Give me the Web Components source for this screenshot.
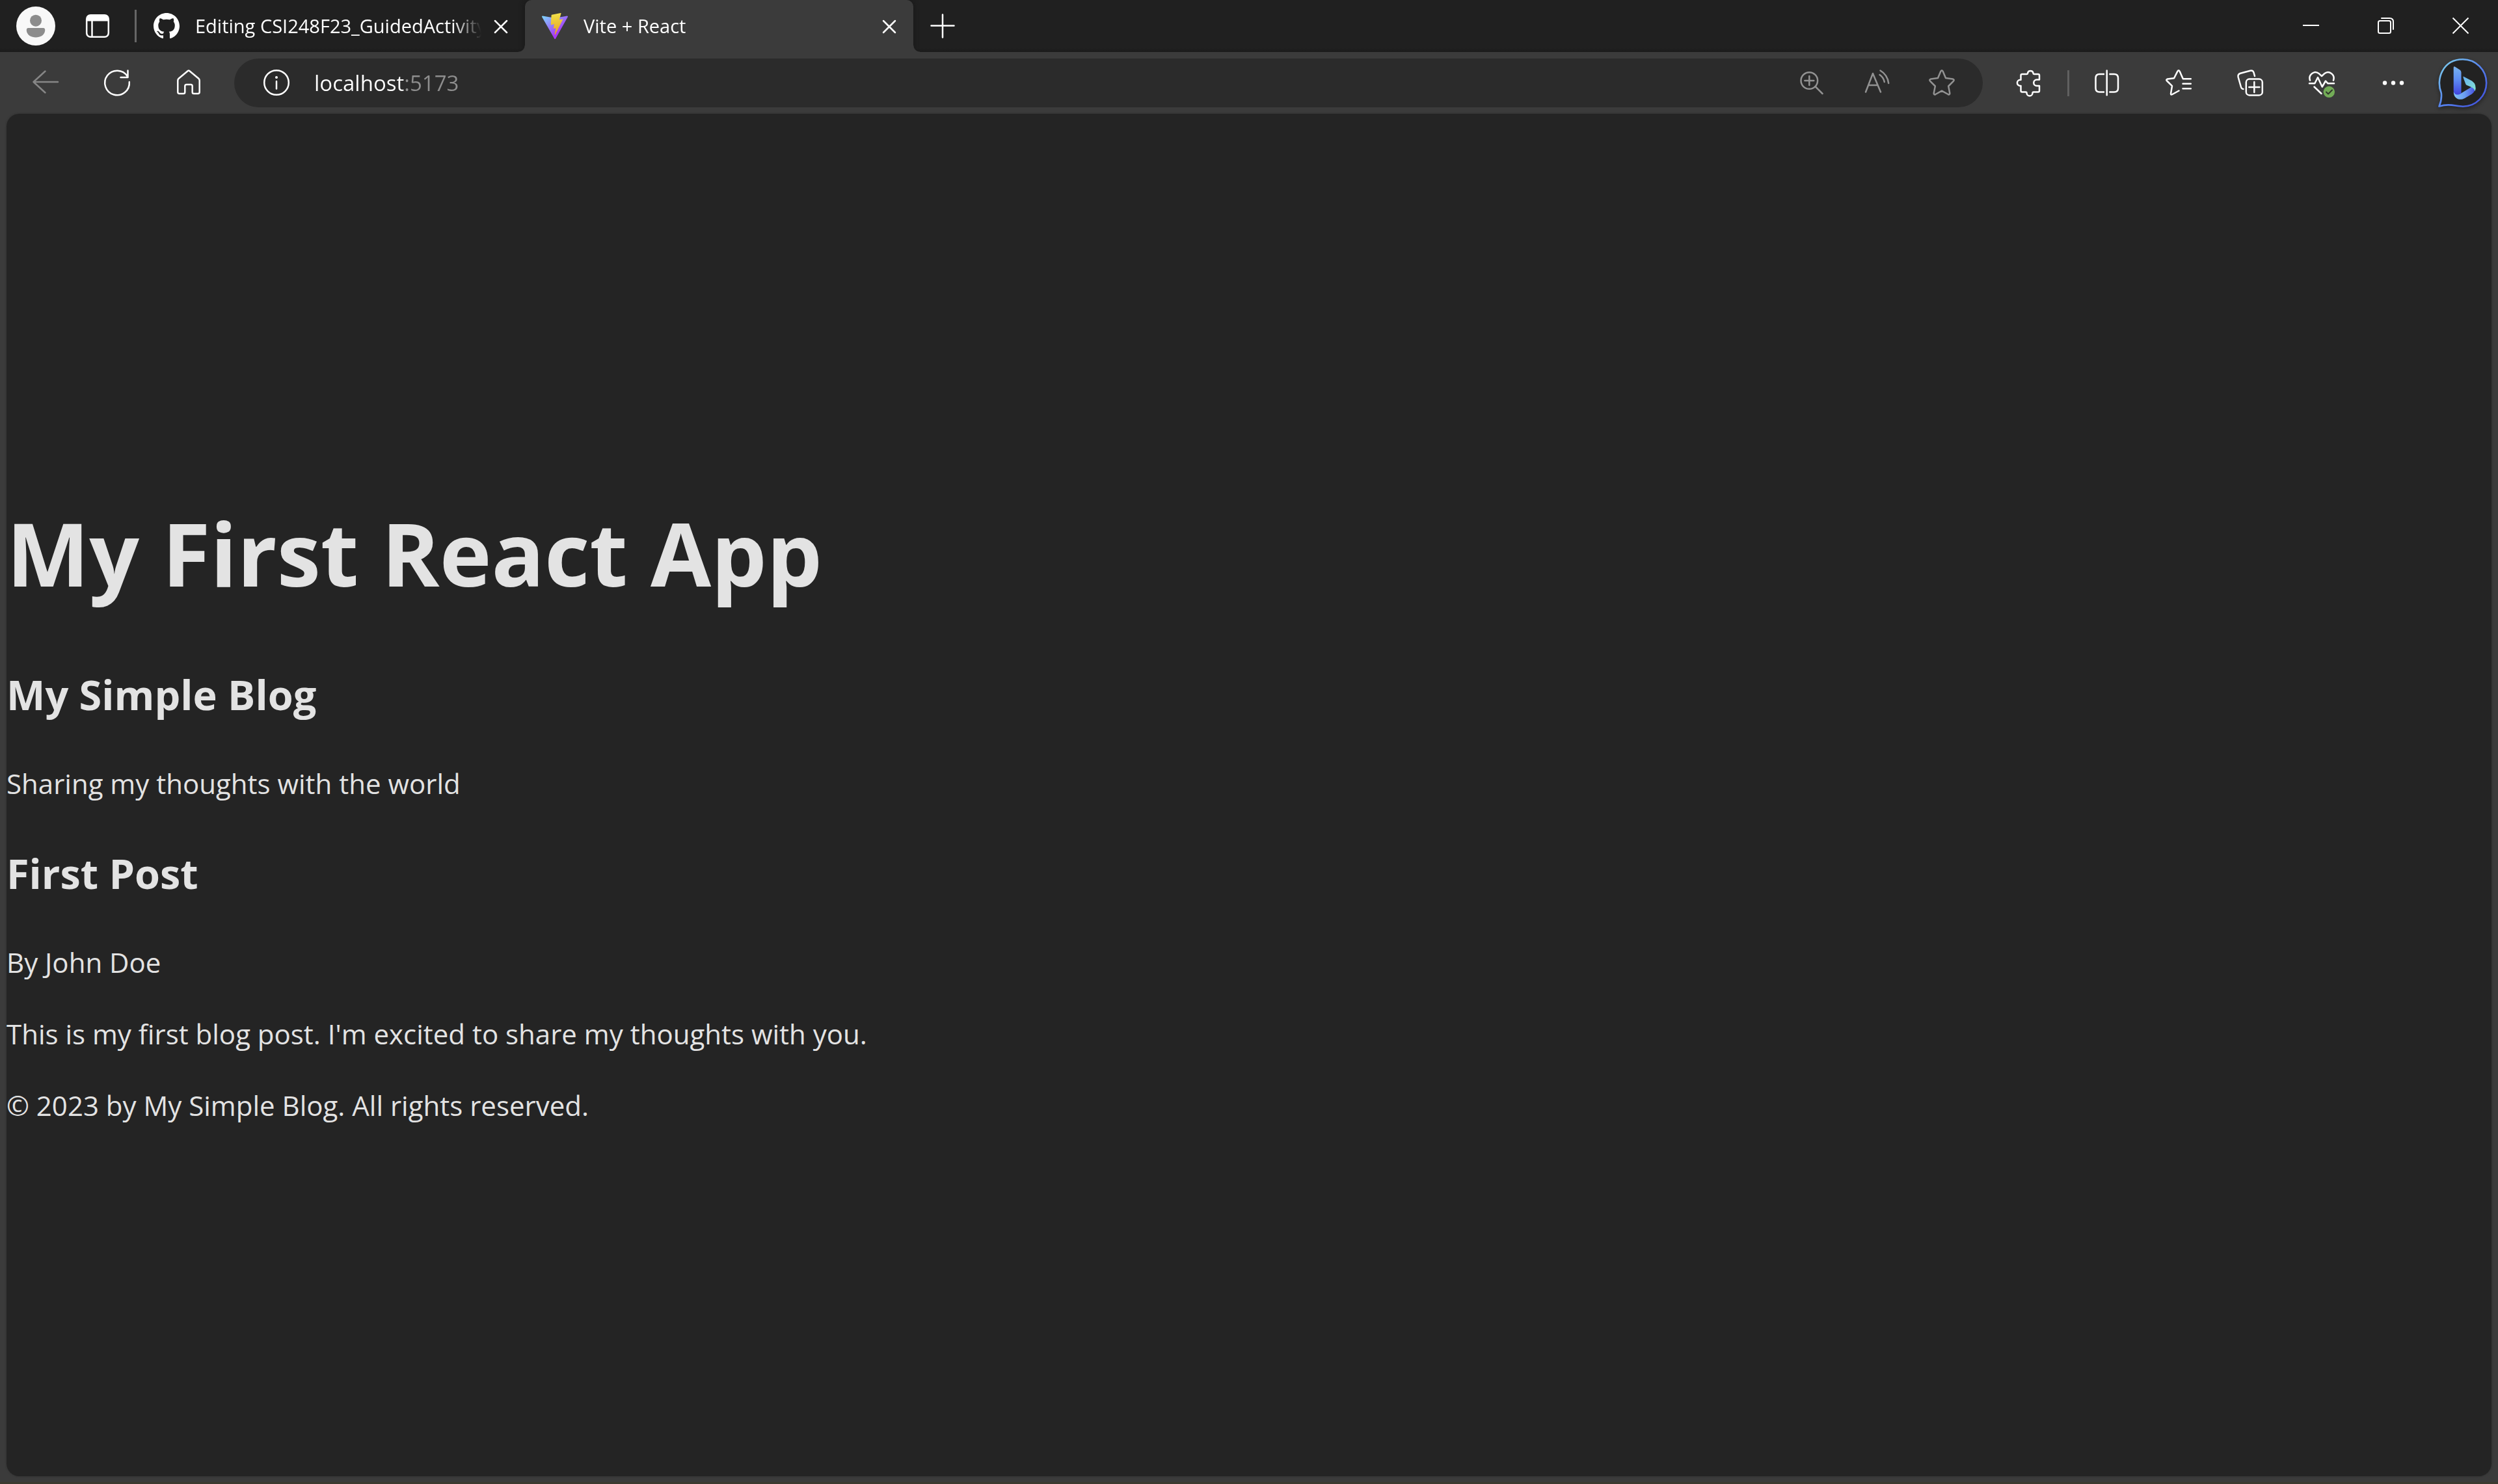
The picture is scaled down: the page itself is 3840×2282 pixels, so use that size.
<!DOCTYPE html>
<html lang="en">
<head>
<meta charset="utf-8">
<title>Vite + React</title>
<style>
  html, body { margin: 0; height: 100%; }
  body { background: #3b3b3b; font-family: "Open Sans", "Noto Sans", sans-serif; color: #fff; }
</style>
</head>
<body>
<browser-window>
  <title-bar slot="tabs">
    <browser-tab icon="github">Editing CSI248F23_GuidedActivity</browser-tab>
    <browser-tab icon="vite" active>Vite + React</browser-tab>
  </title-bar>
  <tool-bar slot="toolbar"></tool-bar>
  <blog-app></blog-app>
</browser-window>

<script>
const ICONS = {
  avatar: [60, `<circle cx="30" cy="30" r="30" fill="#f8f8f8" stroke="none"/><g stroke="none"><circle cx="30" cy="21.700" r="9" fill="#8c8c8c"/><path d="M18.500 33H41.500Q44.500 33 44.500 36.500C44.500 44 37 47.500 30 47.500S15.500 44 15.500 36.500Q15.500 33 18.500 33Z" transform="translate(0 10) scale(1 1)" fill="none"/><path d="M18.500 33H41.500Q44.500 33 44.200 37C43.500 44 37 47.500 30 47.500S16.500 44 15.800 37Q15.500 33 18.500 33Z" fill="#8c8c8c"/></g>`],
  workspaces: [36, `<rect x="1.200" y="1.200" width="33.600" height="33.600" rx="6" /><path d="M1 10.500V7Q1 1 7 1H29Q35 1 35 7V10.500Z" fill="currentColor" stroke="none"/><path d="M9.500 10V34.500"/>`],
  github: [40, `<g transform="scale(2.500)"><path fill="currentColor" stroke="none" d="M8 0C3.580 0 0 3.580 0 8c0 3.540 2.290 6.530 5.470 7.590.4.070.55-.17.55-.38 0-.19-.01-.82-.01-1.490-2.010.37-2.530-.49-2.690-.94-.09-.23-.48-.94-.82-1.130-.28-.15-.68-.52-.01-.53.63-.01 1.080.58 1.230.82.72 1.210 1.870.87 2.330.66.07-.52.28-.87.51-1.070-1.780-.2-3.640-.89-3.640-3.950 0-.87.31-1.590.82-2.150-.08-.2-.36-1.020.08-2.120 0 0 .67-.21 2.200.82.64-.18 1.320-.27 2-.27s1.360.09 2 .27c1.530-1.040 2.200-.82 2.200-.82.44 1.100.16 1.920.08 2.120.51.56.82 1.270.82 2.150 0 3.070-1.870 3.750-3.650 3.950.29.25.54.73.54 1.480 0 1.070-.01 1.930-.01 2.200 0 .21.15.46.55.38A8.010 8.010 0 0016 8c0-4.420-3.580-8-8-8z"/></g>`],
  vite: [40, `<defs><linearGradient id="va" x1="-.828%" x2="57.636%" y1="7.652%" y2="78.411%"><stop offset="0" stop-color="#7fd0ff"/><stop offset="1" stop-color="#a838f5"/></linearGradient><linearGradient id="vb" x1="43.376%" x2="50.316%" y1="2.242%" y2="89.030%"><stop offset="0" stop-color="#f4e04d"/><stop offset=".2" stop-color="#eed43f"/><stop offset="1" stop-color="#e8a524"/></linearGradient></defs><g transform="scale(.156)" stroke="none"><path fill="url(#va)" d="M255.153 37.938L134.897 252.976c-2.483 4.440-8.862 4.466-11.382.048L.875 37.958c-2.746-4.814 1.371-10.646 6.827-9.670l120.385 21.517a6.537 6.537 0 0 0 2.322-.004l117.867-21.483c5.438-.991 9.574 4.796 6.877 9.620Z"/><path fill="url(#vb)" d="M185.432.063L96.440 17.501a3.268 3.268 0 0 0-2.634 3.014l-5.474 92.456a3.268 3.268 0 0 0 3.997 3.378l24.777-5.718c2.318-.535 4.413 1.507 3.936 3.838l-7.361 36.047c-.495 2.426 1.782 4.500 4.151 3.780l15.304-4.649c2.372-.72 4.652 1.360 4.150 3.788l-11.698 56.621c-.732 3.542 3.979 5.473 5.943 2.437l1.313-2.028l72.516-144.720c1.215-2.423-.88-5.186-3.540-4.672l-25.505 4.922c-2.396.462-4.435-1.770-3.759-4.114l16.646-57.705c.677-2.350-1.370-4.583-3.769-4.113Z"/></g>`],
  tabclose: [22, `<path d="M2 3L20 21M20 3L2 21"/>`],
  plus: [36, `<path d="M18 0.500V35.500M.5 17.500H35.500"/>`],
  minimize: [25, `<path stroke-linecap="butt" stroke-width="2" d="M0 12H25"/>`],
  restore: [25, `<rect x="1" y="5" width="19" height="19" rx="2.500" stroke-width="2"/><path stroke-width="2" d="M6 1H18.500Q24 1 24 6.500V18"/>`],
  close: [25, `<path stroke-width="2" stroke-linecap="butt" d="M.5 .5L24.500 24.500M24.500 .5L.5 24.500"/>`],
  back: [40, `<path d="M39 19H1.500M19.500 2.500L1.500 19L19.500 35.500"/>`],
  refresh: [40, `<path d="M38.800 19A18.800 18.800 0 1 1 36 10.500M36.500 1.500V12H25.500"/>`],
  home: [40, `<path d="M18.800 2L4.700 13.800Q3.300 15 3.300 16.800V34.500Q3.300 37 5.800 37H12Q14.300 37 14.300 34.700V25.500Q14.300 23 16.800 23H23.200Q25.700 23 25.700 25.500V34.700Q25.700 37 28 37H34.200Q36.700 37 36.700 34.500V16.800Q36.700 15 35.300 13.800L21.200 2Q20 1 18.800 2Z"/>`],
  info: [40, `<circle cx="20" cy="20" r="18.800"/><circle cx="20" cy="12" r="2" fill="currentColor" stroke="none"/><path d="M20 18V29.500"/>`],
  zoom: [40, `<circle cx="16.300" cy="17" r="12.800"/><path d="M16.300 10V24M9.300 17H23.300M25.500 26L36.500 37"/>`],
  read: [40, `<path d="M3 34.500L14 6L26 34.500M7.500 24H21.500M24.500 8Q30.500 12 31.800 19M25.500 1.500Q36.500 8 38.200 21"/>`],
  star: [40, `<path d="M18.400 2.600Q20 0 21.600 2.600L26 13L36.800 14.500Q40 15.500 37.800 17.800L30.200 25.500L32.300 36.500Q32.300 39.300 29.600 38L20 32.700L10.400 38Q7.700 39.300 7.700 36.500L9.800 25.500L2.200 17.800Q0 15.500 3.200 14.500L14 13Z"/>`],
  extensions: [40, `<path d="M8.500 9Q8.500 7 10.500 7H17.300Q19 7 19 5.500A4.400 4.400 0 0 1 27.600 5.500Q27.600 7 29.300 7H35Q37 7 37 9V15.500H33A4.700 4.700 0 0 0 33 25H37V32.500Q37 34.500 35 34.500H28Q26.500 34.500 26.500 36A4.500 4.500 0 0 1 17.500 36Q17.500 34.500 16 34.500H10.500Q8.500 34.500 8.500 32.500V25H7.500A4.500 4.500 0 0 1 7.500 15.800H8.500Z"/>`],
  split: [40, `<path d="M19.700 1.500V39.200"/><path stroke-linecap="butt" d="M16 7H8.500Q2.500 7 2.500 13V28.500Q2.500 34.500 8.500 34.500H16M23.300 7H31Q37 7 37 13V28.500Q37 34.500 31 34.500H23.300"/>`],
  favorites: [40, `<path d="M38.800 14.300H26.800L21.600 2.600Q20 0 18.400 2.600L13 13.200L3 14.500Q0 15.500 2.200 17.500L10 25.200L8 37Q8 39.500 10.500 38L20.500 32.500M26.500 21.800H38.800M26.500 29.300H38.800"/>`],
  collections: [40, `<rect x="13.800" y="14.600" width="25" height="24.800" rx="5"/><path d="M26.300 19V35M18.300 27H34.300M9.500 30Q6.800 29.800 6 27L1.600 11.500Q.7 7.200 5 5.800L20 1.700Q24.500 .7 25.600 4.800L27 10"/>`],
  essentials: [40, `<path d="M2 16.500C-.8 8 8.500 .5 16 6.300L20 10L24 6.300C31.500 .5 40.800 8 38 16.500M1 21.300H9.300L14 12L20.700 26.500L26 17.500L29.500 21.300H39M8.500 26.500L19.500 37"/><circle cx="31.300" cy="34.300" r="8.700" fill="#73ac57" stroke="none"/><path stroke="#30352c" stroke-width="2" d="M27 34.500L30 37.500L36 31.500"/>`],
  more: [40, `<g fill="currentColor" stroke="none"><circle cx="7" cy="20.500" r="3.200"/><circle cx="20" cy="20.500" r="3.200"/><circle cx="33" cy="20.500" r="3.200"/></g>`],
  bing: [75, `<defs><linearGradient id="ring" x1="0" y1=".2" x2=".8" y2="1"><stop offset="0" stop-color="#79c6ee"/><stop offset=".5" stop-color="#5684ee"/><stop offset="1" stop-color="#4355dd"/></linearGradient><linearGradient id="stem" x1="0" y1="0" x2="0" y2="1"><stop offset="0" stop-color="#78b3ee"/><stop offset=".45" stop-color="#5e8ef3"/><stop offset="1" stop-color="#4145df"/></linearGradient><linearGradient id="leaf" x1="0" y1="0" x2="1" y2="1"><stop offset="0" stop-color="#67aef0"/><stop offset="1" stop-color="#85e6d0"/></linearGradient><linearGradient id="base" x1="0" y1="0" x2="1" y2="0"><stop offset="0" stop-color="#83c5f8"/><stop offset=".5" stop-color="#6b9ef2"/><stop offset="1" stop-color="#454ee0"/></linearGradient></defs><path d="M1.500 73.500Q6 63 4.800 53C-4 32 7 1.300 38 1.300A36 36 0 0 1 38 73.700C27 73.700 18 68.500 1.500 73.500Z" fill="#222" stroke="url(#ring)" stroke-width="2.600"/><g stroke="none"><path fill="url(#base)" d="M23.700 51C24 63 34 65 41 61L52 54.500Q58 50 57 42Q55 37 50 44.500L36 53Q29 57 23.700 51Z"/><path fill="url(#leaf)" d="M39.200 27.700L52 34.500Q60 40 56.700 50.500Q56 46 50 43.500L44 41Q42.700 40.500 42 38.500L38.800 30Q38 27 39.200 27.700Z"/><path fill="url(#stem)" d="M23.700 14Q23.700 11.500 26 12.700L33.500 17.500Q35.500 19 35.500 21.500V53.500C31 57 23.700 56.500 23.700 49Z"/></g>`]
};

class IconGlyph extends HTMLElement {
  connectedCallback() {
    const [s, body] = ICONS[this.getAttribute("name")];
    this.attachShadow({ mode: "open" }).innerHTML = `
      <style>:host{display:block;flex:none} svg{display:block;overflow:visible}</style>
      <svg width="${s}" height="${s}" viewBox="0 0 ${s} ${s}" fill="none" stroke="currentColor" stroke-width="2.500" stroke-linecap="round" stroke-linejoin="round" aria-hidden="true">${body}</svg>`;
  }
}

const BUTTON = `button{all:unset;box-sizing:border-box;display:flex;align-items:center;justify-content:center;flex:none;cursor:default}`;

class BrowserWindow extends HTMLElement {
  connectedCallback() {
    this.attachShadow({ mode: "open" }).innerHTML = `
      <style>
        :host{display:flex;flex-direction:column;min-height:100vh;box-sizing:border-box;background:#3b3b3b;border-bottom:3px solid #3c3a2f}
        main{flex:1;display:flex;margin:0 10px 9px;background:#242424;border-radius:20px;box-shadow:0 0 3px #2c2c2c}
      </style>
      <slot name="tabs"></slot><slot name="toolbar"></slot>
      <main><slot></slot></main>`;
  }
}

class TitleBar extends HTMLElement {
  connectedCallback() {
    this.attachShadow({ mode: "open" }).innerHTML = `
      <style>
        :host{display:flex;align-items:center;height:80px;background:linear-gradient(#202020 74px,#1b1b1b)}
        ${BUTTON}
        .profile{width:110px;height:80px}
        .spaces{width:80px;height:80px}
        .new{width:90px;height:78px}
        .rule{width:3px;height:50px;margin-left:17px;background:#666}
        .controls{display:flex;margin-left:auto}
        .controls button{width:115px;height:80px;padding-bottom:1px}
        nav{display:flex}
      </style>
      <button class="profile" aria-label="Profile"><icon-glyph name="avatar"></icon-glyph></button>
      <button class="spaces" aria-label="Tab actions"><icon-glyph name="workspaces"></icon-glyph></button>
      <span class="rule"></span>
      <nav><slot></slot></nav>
      <button class="new" aria-label="New tab"><icon-glyph name="plus"></icon-glyph></button>
      <div class="controls">
        <button aria-label="Minimize"><icon-glyph name="minimize"></icon-glyph></button>
        <button aria-label="Restore"><icon-glyph name="restore"></icon-glyph></button>
        <button aria-label="Close"><icon-glyph name="close"></icon-glyph></button>
      </div>`;
  }
}

class BrowserTab extends HTMLElement {
  connectedCallback() {
    this.attachShadow({ mode: "open" }).innerHTML = `
      <style>
        :host{display:flex;align-items:center;position:relative;box-sizing:border-box;width:597px;height:80px;padding:0 17px 0 26px;font-size:29px;line-height:40px}
        :host([active]){background:#3b3b3b;border-radius:10px 10px 0 0;box-shadow:0 0 8px #161616;clip-path:inset(0 -12px)}
        :host([active])::before,:host([active])::after{content:"";position:absolute;bottom:0;width:10px;height:10px}
        :host([active])::before{right:100%;background:radial-gradient(circle at 0 0,transparent 9px,#3b3b3b 10px)}
        :host([active])::after{left:100%;background:radial-gradient(circle at 100% 0,transparent 9px,#3b3b3b 10px)}
        .title{flex:1;min-width:0;margin:0 10px 0 24px;overflow:hidden;white-space:nowrap;-webkit-mask-image:linear-gradient(to left,transparent,#000 44px);mask-image:linear-gradient(to left,transparent,#000 44px)}
        ${BUTTON}
        button{width:40px;height:40px}
      </style>
      <icon-glyph name="${this.getAttribute("icon")}"></icon-glyph>
      <span class="title"><slot></slot></span>
      <button aria-label="Close tab"><icon-glyph name="tabclose"></icon-glyph></button>`;
  }
}

class ToolBar extends HTMLElement {
  connectedCallback() {
    const b = (name, label, cls = "") => `<button class="${cls}" aria-label="${label}"><icon-glyph name="${name}"></icon-glyph></button>`;
    this.attachShadow({ mode: "open" }).innerHTML = `
      <style>
        :host{display:flex;align-items:center;height:95px;padding:0 17px 0 15px;background:#3b3b3b}
        ${BUTTON}
        button{width:110px;height:75px;padding-bottom:1px}
        .off{color:#868686}
        .address{flex:1;display:flex;align-items:center;height:75px;margin:0 15px;padding:0 13px 0 15px;border-radius:38px;background:#2b2b2b}
        .address button{width:100px;color:#929292}
        .address .site{width:100px;color:#fff}
        input{flex:1;min-width:0;height:50px;margin:0 0 0 8px;padding:0;border:0;outline:0;font:33px/50px "Open Sans","Noto Sans",sans-serif;color:transparent;background:linear-gradient(to right,#fff 139px,#8e8e8e 139px);-webkit-background-clip:text;background-clip:text}
        .rule{width:3px;height:40px;margin:0 3px 0 5px;background:#606060}
        .bing{width:75px;margin-left:14px;padding:0;filter:drop-shadow(0 3px 3px #0006)}
      </style>
      ${b("back", "Back", "off")}${b("refresh", "Refresh")}${b("home", "Home")}
      <div class="address">
        ${b("info", "View site information", "site")}
        <input type="text" aria-label="Address and search bar" value="localhost:5173" spellcheck="false">
        ${b("zoom", "Zoom")}${b("read", "Read aloud")}${b("star", "Add to favorites")}
      </div>
      ${b("extensions", "Extensions")}
      <span class="rule"></span>
      ${b("split", "Split screen")}${b("favorites", "Favorites")}${b("collections", "Collections")}${b("essentials", "Browser essentials")}${b("more", "Settings and more")}${b("bing", "Bing Chat", "bing")}`;
  }
}

class BlogApp extends HTMLElement {
  connectedCallback() {
    this.attachShadow({ mode: "open" }).innerHTML = `
      <style>
        :host{display:flex;align-items:center;flex:1;color:#e3e3e3;font-size:42px;line-height:66px}
        .root{display:flow-root}
        h1{margin:104px 0 90px;font-size:135px;line-height:155px}
        h2{margin:55px 0;font-size:63px;line-height:99px}
        p{margin:44px 0}
      </style>
      <div class="root">
        <h1>My First React App</h1>
        <header><h2>My Simple Blog</h2><p>Sharing my thoughts with the world</p></header>
        <article><h2>First Post</h2><p>By John Doe</p><p>This is my first blog post. I'm excited to share my thoughts with you.</p></article>
        <footer><p>© 2023 by My Simple Blog. All rights reserved.</p></footer>
      </div>`;
  }
}

customElements.define("icon-glyph", IconGlyph);
customElements.define("browser-window", BrowserWindow);
customElements.define("title-bar", TitleBar);
customElements.define("browser-tab", BrowserTab);
customElements.define("tool-bar", ToolBar);
customElements.define("blog-app", BlogApp);
</script>
</body>
</html>
